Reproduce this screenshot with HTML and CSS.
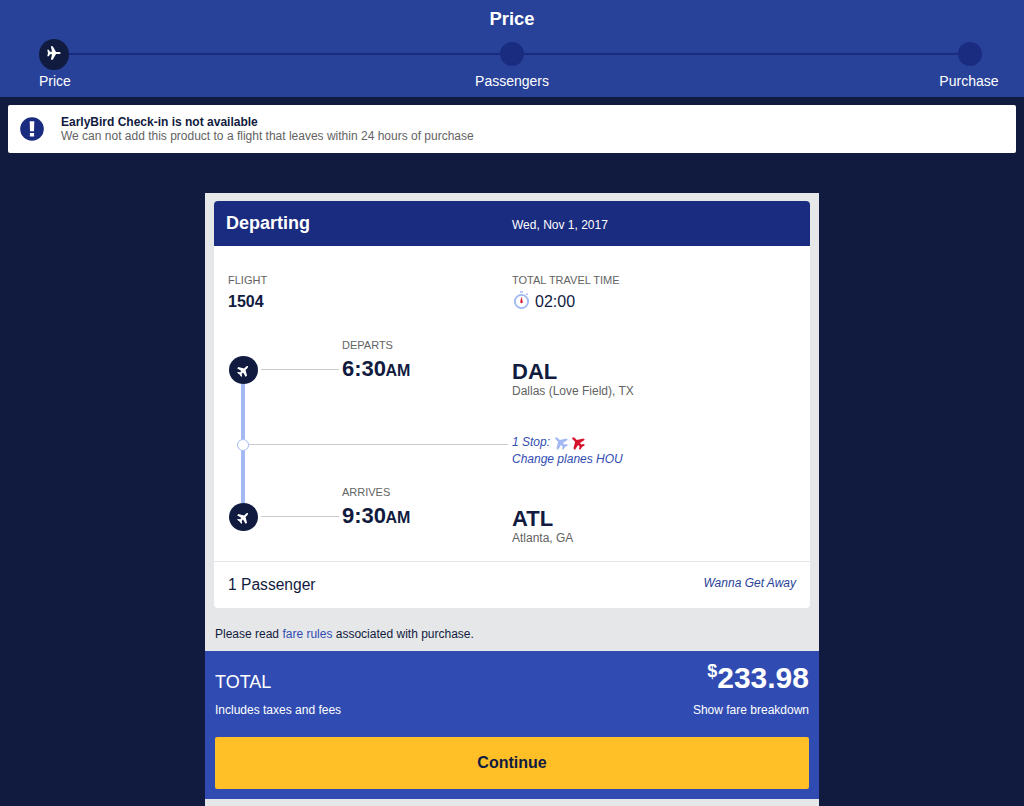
FILE: index.html
```html
<!DOCTYPE html>
<html lang="en">
<head>
<meta charset="utf-8">
<title>Price</title>
<link rel="stylesheet" href="styles.css">
</head>
<body>
<svg class="defs" aria-hidden="true"><symbol id="plane" viewBox="0 0 24 24"><path d="M23.500 12c0-1-1.600-1.900-3.400-1.900h-4.600L9.800.6H6.600l2 9.300H5.200L3 6.600H.5L1.700 12 .5 17.400H3l2.200-3.300h3.400l-2 9.300h3.200l5.700-9.500h4.600c1.800 0 3.400-.9 3.400-1.900z"/></symbol></svg>
<header class="top">
  <h1 class="title">Price</h1>
  <div class="track">
    <span class="step current"><svg class="plane level"><use href="#plane"/></svg></span>
    <span class="bar first"></span><span class="step"></span><span class="bar"></span><span class="step"></span>
  </div>
  <div class="labels"><span>Price</span><span class="mid">Passengers</span><span class="end">Purchase</span></div>
</header>
<section class="notice">
  <svg class="alert" viewBox="0 0 24 24"><circle cx="12" cy="12" r="11.800" fill="#1a2c80"/><path d="M9.700 4.200h4.600L14 14.200h-4zM9.900 16h4.200v3.500H9.900z" fill="#fff"/></svg>
  <div><b>EarlyBird Check-in is not available</b><p>We can not add this product to a flight that leaves within 24 hours of purchase</p></div>
</section>
<main class="panel">
  <article class="card">
    <div class="card-head"><h2>Departing</h2><span>Wed, Nov 1, 2017</span></div>
    <div class="summary">
      <div><div class="label">FLIGHT</div><div class="value"><b>1504</b></div></div>
      <div><div class="label">TOTAL TRAVEL TIME</div>
        <div class="value"><svg class="watch" viewBox="0 0 19 19"><g fill="none" stroke="#a3b9f3"><circle cx="9.500" cy="11.500" r="6.600" stroke-width="1.900"/><path d="M8 2h3M14.200 3.600l1.500 1" stroke-width="1.700"/></g><path d="M9.500 7.400l.9 3.900a1.100 1.100 0 1 1-1.800 0z" fill="#d5152e" stroke="#d5152e" stroke-width=".4"/></svg>02:00</div></div>
    </div>
    <div class="route">
      <div class="rail"><span class="dot"><svg class="plane up"><use href="#plane"/></svg></span><span class="line"></span><span class="stop"></span><span class="line"></span><span class="dot"><svg class="plane up"><use href="#plane"/></svg></span></div>
      <div class="legs">
        <div class="leg"><span class="rule"></span><div class="time"><div class="label">DEPARTS</div><div class="clock">6:30<small>AM</small></div></div><div class="place"><b>DAL</b><p>Dallas (Love Field), TX</p></div></div>
        <div class="transfer"><span class="rule"></span><div class="change">1 Stop: <svg class="plane down pale"><use href="#plane"/></svg><svg class="plane down red"><use href="#plane"/></svg><br>Change planes HOU</div></div>
        <div class="leg"><span class="rule"></span><div class="time"><div class="label">ARRIVES</div><div class="clock">9:30<small>AM</small></div></div><div class="place"><b>ATL</b><p>Atlanta, GA</p></div></div>
      </div>
    </div>
    <div class="card-foot"><span>1 Passenger</span><i>Wanna Get Away</i></div>
  </article>
  <p class="rules">Please read <a>fare rules</a> associated with purchase.</p>
  <section class="total">
    <div class="sum"><span>TOTAL</span><strong><sup>$</sup>233.98</strong></div>
    <div class="detail"><span>Includes taxes and fees</span><span>Show fare breakdown</span></div>
    <button class="continue">Continue</button>
  </section>
</main>
</body>
</html>
```

FILE: styles.css
```css
* { box-sizing: border-box; }
html, body { height: 100%; }
body { margin: 0; overflow: hidden; background: #111b40; color: #111b40; font: 12px/14px "Liberation Sans", Arial, sans-serif; display: flex; flex-direction: column; }
h1, h2, p { margin: 0; }
.defs { display: none; }
.plane { display: block; fill: #fff; }
.top { height: 97px; flex: none; background: #284299; color: #fff; padding-top: 8px; }
.title { font-size: 18.400px; line-height: 22px; text-align: center; }
.track { display: flex; align-items: center; height: 30px; margin: 9px 42px 0 39px; }
.step { width: 24px; height: 24px; border-radius: 50%; background: #1a2c80; }
.step.current { width: 30px; height: 31px; margin-bottom: -1px; background: #111b40; display: flex; justify-content: center; padding-top: 7px; }
.level { width: 14px; height: 14px; }
.bar { flex: 1; height: 2px; background: #1a2c80; margin-bottom: 1px; }
.bar.first { flex: 0 0 431px; }
.labels { display: grid; grid-template-columns: 1fr 1fr 1fr; padding: 0 25.500px 0 39px; font-size: 14px; line-height: 16px; margin-top: 4px; }
.mid { text-align: center; position: relative; left: -6.700px; }
.end { text-align: right; }
.notice { flex: none; display: flex; align-items: center; height: 48px; margin: 8px 8px 40px; padding-left: 12px; gap: 17px; border-radius: 2px; background: #fff; }
.notice p { color: #636363; }
.alert { width: 24px; height: 24px; margin-bottom: 1px; }
.panel { flex: 1; width: 614px; margin: 0 auto; background: #e6e7e8; padding-top: 8px; }
.card { margin: 0 9px; height: 407px; border-radius: 4px; overflow: hidden; background: #fff; display: flex; flex-direction: column; }
.card-head { height: 45px; background: #1a2c80; color: #fff; display: grid; grid-template-columns: 286px 1fr; align-items: center; padding-left: 12px; }
.card-head h2 { font-size: 18px; padding-bottom: 2px; }
.card-head span { padding-top: 3px; }
.summary { display: grid; grid-template-columns: 284px 1fr; padding: 27px 0 0 14px; }
.label { font-size: 11px; line-height: 14px; color: #636363; }
.value { display: flex; align-items: center; height: 20px; margin-top: 5px; font-size: 16px; }
.watch { width: 19px; height: 19px; margin: -5px 4px 0 0; }
.route { display: flex; height: 223px; margin: 26px 0 0 14px; }
.rail { width: 30px; padding-top: 18px; display: flex; flex-direction: column; align-items: center; }
.dot { width: 29px; height: 28px; margin-left: 1px; border-radius: 50%; background: #111b40; flex: none; display: flex; align-items: center; justify-content: center; }
.up { width: 13px; height: 13px; transform: rotate(-45deg); }
.line { width: 4px; height: 55px; background: #a3b9f3; }
.stop { width: 12px; height: 12px; flex: none; border: 1px solid #a3b9f3; border-radius: 50%; background: #fff; }
.stop + .line { height: 52px; }
.legs { flex: 1; }
.leg { display: grid; grid-template-columns: 78px 170px 1fr; column-gap: 3px; padding-left: 3px; height: 97px; }
.leg .rule { margin-top: 31px; }
.rule { height: 1px; background: #c9cacc; }
.clock { font-size: 22px; line-height: 24px; margin-top: 5px; font-weight: bold; }
.clock small { font-size: 16px; margin-left: -.5px; }
.place { margin-left: -3px; padding-top: 22px; }
.place b { display: block; font-size: 22px; line-height: 24px; }
.place p { color: #636363; }
.transfer { display: flex; height: 50px; margin-left: -9px; gap: 4px; }
.transfer .rule { width: 259px; margin-top: 9px; }
.change { color: #304cb2; font-style: italic; line-height: 17px; margin-top: -1px; }
.change .plane { display: inline-block; vertical-align: -4px; width: 15px; height: 15px; margin-right: 2px; }
.down { transform: rotate(-135deg); }
.change .pale { fill: #a3b9f3; }
.change .red { fill: #d5152e; }
.card-foot { margin-top: auto; height: 47px; border-top: 1px solid #e6e7e8; padding: 0 14px; display: flex; align-items: center; justify-content: space-between; font-size: 15.600px; }
.card-foot i { color: #284299; font-size: 12px; padding-bottom: 4px; }
.rules { padding: 19px 10px 10px; }
.rules a { color: #304cb2; }
.total { height: 148px; background: #304cb2; color: #fff; padding: 0 10px; }
.sum { height: 52px; display: flex; align-items: baseline; justify-content: space-between; font-size: 18px; padding-top: 7px; }
.sum strong { font-size: 30px; line-height: 40px; }
.sum sup { font-size: 18px; line-height: 0; vertical-align: 11px; }
.detail { display: flex; justify-content: space-between; }
.continue { display: block; width: 100%; height: 52px; margin-top: 20px; border: 0; border-radius: 2px; background: #ffbf27; color: #111b40; font: bold 16px "Liberation Sans", Arial, sans-serif; }
```
